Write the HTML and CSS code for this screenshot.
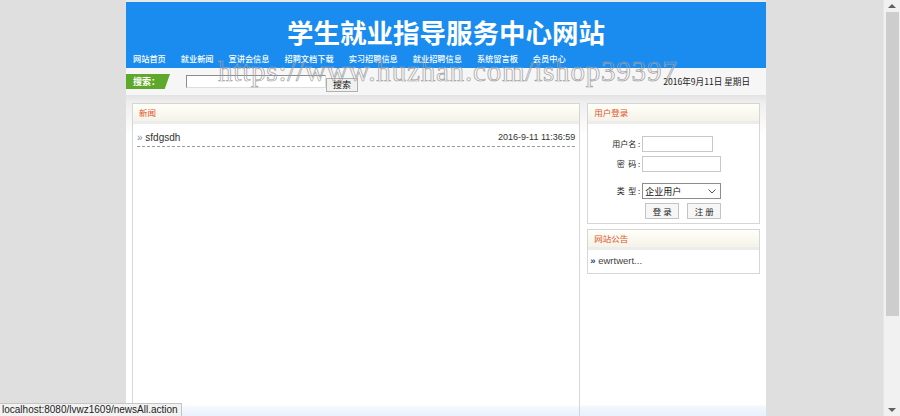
FILE: index.html
```html
<!DOCTYPE html>
<html lang="zh">
<head>
<meta charset="utf-8">
<title>学生就业指导服务中心网站</title>
<link rel="stylesheet" href="styles.css">
</head>
<body>
<div class="wrap">
  <header class="banner"><h1>学生就业指导服务中心网站</h1></header>
  <nav class="nav">
    <a>网站首页</a>
    <a>就业新闻</a>
    <a>宣讲会信息</a>
    <a>招聘文档下载</a>
    <a>实习招聘信息</a>
    <a>就业招聘信息</a>
    <a>系统留言板</a>
    <a>会员中心</a>
  </nav>
  <div class="searchbar">
    <span class="tag">搜索：</span>
    <input class="kw" type="text">
    <button class="sbtn">搜索</button>
    <span class="date">2016年9月11日 星期日</span>
  </div>
  <div class="main">
    <section class="panel news">
      <div class="ph">新闻</div>
      <ul class="list">
        <li><a><span class="raq">»</span> sfdgsdh</a><span class="time">2016-9-11 11:36:59</span></li>
      </ul>
    </section>
    <aside class="side">
      <section class="panel login">
        <div class="ph">用户登录</div>
        <form class="form">
          <div class="frow"><label>用户名 :</label><input class="in1" type="text"></div>
          <div class="frow"><label>密&nbsp;&nbsp;码 :</label><input class="in2" type="password"></div>
          <div class="frow r3"><label>类&nbsp;&nbsp;型 :</label>
            <span class="selwrap"><select class="sel"><option>企业用户</option></select><svg class="chev" width="8" height="5" viewBox="0 0 8 5"><path d="M0.5 0.5 L4 4 L7.5 0.5" fill="none" stroke="#555" stroke-width="1"/></svg></span>
          </div>
          <div class="btns"><button type="button">登 录</button><button type="button">注 册</button></div>
        </form>
      </section>
      <section class="panel notice">
        <div class="ph">网站公告</div>
        <ul class="nlist"><li><span class="dot">»</span> ewrtwert...</li></ul>
      </section>
    </aside>
  </div>
</div>
<div class="watermark">https://www.huzhan.com/ishop39397</div>
<div class="status">localhost:8080/lvwz1609/newsAll.action</div>
<div class="scrollbar"><span class="up"></span><span class="thumb"></span><span class="down"></span></div>
</body>
</html>
```

FILE: styles.css
```css
html, body {
  margin: 0;
  height: 416px;
  overflow: hidden;
  background: #dfdfdf;
}
body {
  font-family: "Liberation Sans", "Noto Sans CJK SC", sans-serif;
  color: #222;
}
.wrap {
  width: 640px;
  margin-left: 126px;
  height: 416px;
  display: flex;
  flex-direction: column;
  border-top: 2px solid #e9e9e9;
  box-sizing: border-box;
}
.banner {
  height: 46px;
  background: #1a8cf0;
  display: flex;
  justify-content: center;
  align-items: flex-end;
}
.banner h1 {
  margin: 0 0 2px;
  font: 700 26.5px/28px "Noto Sans CJK SC", sans-serif;
  color: #fff;
}
.nav {
  height: 20px;
  background: #1a8cf0;
  display: flex;
  align-items: center;
  gap: 15px;
  padding-left: 7px;
}
.nav a {
  color: #fff;
  font: 500 8.2px/1 "Noto Sans CJK SC", sans-serif;
}
.searchbar {
  height: 27px;
  background: #f6f6f6;
  display: flex;
  align-items: center;
}
.tag {
  width: 44px;
  height: 15px;
  box-sizing: border-box;
  padding-left: 7px;
  background: #5ea92b;
  color: #fff;
  font: 700 9px/15px "Noto Sans CJK SC", sans-serif;
  clip-path: polygon(0 0, 100% 0, 88% 100%, 0 100%);
}
.kw {
  margin: 0 0 0 16px;
  width: 140px;
  height: 13px;
  box-sizing: border-box;
  border: 1px solid #8d8d8d;
  border-right-color: #ddd;
  border-bottom-color: #ddd;
  padding: 0;
  background: #fff;
}
.sbtn {
  align-self: flex-end;
  margin: 0 0 3px;
  width: 32px;
  height: 14px;
  padding: 0;
  border: 1px solid #b0b0b0;
  background: #f0f0f0;
  font: 9px/12px "Noto Sans CJK SC", sans-serif;
  color: #111;
}
.date {
  margin-left: auto;
  margin-right: 16px;
  font: 8.6px/1 "Noto Sans CJK SC", sans-serif;
  color: #222;
}
.main {
  flex: 1;
  display: flex;
  gap: 7px;
  padding: 8px 6px 0 6px;
  min-height: 0;
  background:
    linear-gradient(to top, #eaf1fc 0, #f3f7fd 10px, rgba(255,255,255,0) 11px),
    linear-gradient(#e3e3e3, #efefef 8px, #fff 40px);
}
.panel {
  border: 1px solid #d6d6d6;
  background: #fff;
}
.ph {
  height: 17px;
  line-height: 17px;
  padding-left: 6px;
  color: #e2531f;
  font-size: 8.5px;
  font-family: "Noto Sans CJK SC", sans-serif;
  background: linear-gradient(#fffff9, #f5f3e8);
  border-bottom: 3px solid #ececec;
}
.news {
  width: 449px;
  box-sizing: border-box;
  border-bottom: none;
  background: linear-gradient(to top, #eaf1fc 0, #f6f9fd 10px, #fff 11px);
}
.list {
  list-style: none;
  margin: 0;
  padding: 0;
}
.list li {
  display: flex;
  justify-content: space-between;
  align-items: center;
  height: 18px;
  margin: 4px 4px 0 4px;
  border-bottom: 1px dashed #9a9a9a;
  font-size: 10px;
}
.list a {
  color: #333;
}
.raq {
  color: #7d8eaa;
}
.time {
  font-size: 9px;
  color: #333;
}
.side {
  width: 173px;
  display: flex;
  flex-direction: column;
  gap: 5px;
}
.login {
  padding-bottom: 4px;
}
.form {
  margin: 0;
  padding-top: 8px;
}
.frow {
  display: flex;
  align-items: center;
  height: 16px;
  margin-top: 4px;
}
.frow.r3 {
  margin-top: 11px;
}
.frow label {
  width: 54px;
  padding-right: 2px;
  box-sizing: border-box;
  text-align: right;
  font: 8px/1 "Noto Sans CJK SC", sans-serif;
  color: #222;
}
.frow input {
  height: 16px;
  box-sizing: border-box;
  border: 1px solid #c8c8c8;
  padding: 0;
  background: #fff;
}
.in1 { width: 71px; }
.in2 { width: 79px; }
.selwrap {
  position: relative;
  display: flex;
}
.sel {
  appearance: none;
  -webkit-appearance: none;
  width: 79px;
  height: 16px;
  box-sizing: border-box;
  border: 1px solid #8d8d8d;
  border-radius: 0;
  padding: 0 0 0 2px;
  background: #fff;
  font: 9px "Noto Sans CJK SC", sans-serif;
  color: #111;
}
.chev {
  position: absolute;
  right: 5px;
  top: 6px;
  pointer-events: none;
}
.btns {
  display: flex;
  gap: 8px;
  padding-left: 57px;
  margin-top: 4px;
}
.btns button {
  width: 34px;
  height: 16px;
  padding: 0;
  border: 1px solid #c4c4c4;
  background: #f6f6f6;
  font: 8.5px/14px "Noto Sans CJK SC", sans-serif;
  color: #222;
}
.nlist {
  list-style: none;
  margin: 0;
  padding: 3px 0 4px 2px;
}
.nlist li {
  height: 16px;
  line-height: 16px;
  font-size: 9.5px;
  color: #444;
}
.dot {
  color: #1c3d8f;
  font-weight: 700;
}
.watermark {
  position: absolute;
  left: 218px;
  top: 57px;
  font: 29px/29px "Liberation Serif", serif;
  letter-spacing: 0.8px;
  color: transparent;
  -webkit-text-stroke: 0.7px #a0a0a0;
  pointer-events: none;
  white-space: nowrap;
}
.status {
  position: fixed;
  left: 0;
  bottom: 0;
  height: 12px;
  padding: 0 3px 0 2px;
  background: #f2f2f2;
  border-top: 1px solid #c4c4c4;
  border-right: 1px solid #c4c4c4;
  font: 10px/12px "Liberation Sans", sans-serif;
  color: #222;
}
.scrollbar {
  position: fixed;
  top: 0;
  right: 0;
  width: 17px;
  height: 416px;
  background: #f1f1f1;
  border-left: 1px solid #e6e6e6;
  box-sizing: border-box;
}
.thumb {
  position: absolute;
  top: 12px;
  left: 2px;
  width: 13px;
  height: 304px;
  background: #cdcdcd;
}
.up, .down {
  position: absolute;
  left: 4px;
  width: 0;
  height: 0;
  border-left: 4px solid transparent;
  border-right: 4px solid transparent;
}
.up {
  top: 4px;
  border-bottom: 4px solid #606060;
}
.down {
  bottom: 4px;
  border-top: 4px solid #606060;
}
```
